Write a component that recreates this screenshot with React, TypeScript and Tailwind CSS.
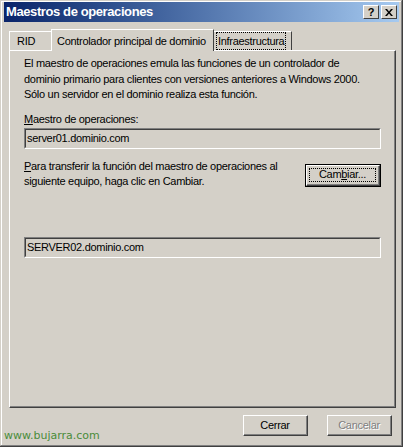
import React from "react";

const F = { fontFamily: '"Liberation Sans", Arial, sans-serif' };

function Field({ text }: { text: string }) {
  return (
    <div className="border-t border-l border-t-[#808080] border-l-[#808080] border-b border-r border-b-white border-r-white">
      <div className="border-t border-l border-t-[#404040] border-l-[#404040] border-b border-r border-b-[#d4d0c8] border-r-[#d4d0c8] h-[19px] flex items-center px-[1px] text-[11px] text-black">
        {text}
      </div>
    </div>
  );
}

function Btn({ children, disabled, focus, w }: { children: React.ReactNode; disabled?: boolean; focus?: boolean; w: string }) {
  return (
    <div className={`${w} h-[23px] border ${focus ? "border-black" : "border-transparent"}`}>
      <div className="w-full h-full border-t border-l border-t-white border-l-white border-b border-r border-b-[#404040] border-r-[#404040]">
        <div className="w-full h-full border-b border-r border-b-[#808080] border-r-[#808080] flex items-center justify-center p-[2px]">
          <div className={`w-full h-full flex items-center justify-center text-[11px] ${focus ? "outline-1 outline-dotted outline-black -outline-offset-1" : ""} ${disabled ? "text-[#808080] [text-shadow:1px_1px_0_#fff]" : "text-black"}`}>
            {children}
          </div>
        </div>
      </div>
    </div>
  );
}

export default function App() {
  return (
    <div style={F} className="w-[403px] h-[447px] bg-[#d4d0c8] border-r border-b border-r-[#404040] border-b-[#404040] relative overflow-hidden tracking-[-0.3px]">
      <div className="h-full border-t border-l border-t-[#d4d0c8] border-l-[#d4d0c8] border-r border-b border-r-[#808080] border-b-[#808080] flex flex-col">
        <div className="h-full border-t border-l border-t-white border-l-white flex flex-col px-[2px]">
          {/* Title bar */}
          <div className="h-[20px] bg-gradient-to-r from-[#0a246a] to-[#a6caf0] flex items-center justify-between pl-[2px] pr-[2px]">
            <span className="text-white font-bold text-[13px] tracking-[-0.4px]">Maestros de operaciones</span>
            <div className="flex gap-[2px] tracking-normal">
              {["?", "x"].map((c) => (
                <div key={c} className="w-[16px] h-[14px] bg-[#d4d0c8] border-t border-l border-t-white border-l-white border-b border-r border-b-[#404040] border-r-[#404040] flex items-center justify-center font-bold leading-none text-black">
                  {c === "?" ? <span className="text-[11px]">?</span> : (
                    <svg width="8" height="7" viewBox="0 0 8 7">
                      <path d="M0 0h2l2 2.5L6 0h2L5 3.5 8 7H6L4 4.5 2 7H0l3-3.5z" fill="#000" />
                    </svg>
                  )}
                </div>
              ))}
            </div>
          </div>

          {/* Tabs */}
          <div className="flex items-end pl-[5px] mt-[6px] h-[22px] text-[11px] whitespace-nowrap">
            <div className="h-[19px] w-[43px] border-t border-l border-t-white border-l-white flex items-center pl-[7px] text-black">RID</div>
            <div className="h-[22px] w-[163px] -ml-[1px] border-t border-l border-r border-t-white border-l-white border-r-[#404040] flex items-start pt-[3px] pl-[5px] text-black relative z-10 bg-[#d4d0c8] -mb-[1px]">
              Controlador principal de dominio
            </div>
            <div className="h-[19px] w-[78px] border-t border-r border-t-white border-r-[#404040] flex items-center pl-[3px] text-black">
              <span className="outline-1 outline-dotted outline-black px-[1px]">Infraestructura</span>
            </div>
          </div>

          {/* Panel */}
          <div className="ml-[5px] mr-[3px] h-[358px] border-t border-l border-t-white border-l-white border-r border-b border-r-[#404040] border-b-[#404040]">
            <div className="h-full border-r border-b border-r-[#808080] border-b-[#808080] pl-[14px] pr-[13px] pt-[5px] text-[11px] text-black whitespace-nowrap">
              <p className="leading-[15.5px]">
                El maestro de operaciones emula las funciones de un controlador de<br />
                dominio primario para clientes con versiones anteriores a Windows 2000.<br />
                Sólo un servidor en el dominio realiza esta función.
              </p>
              <p className="mt-[9px] leading-[15px]"><u>M</u>aestro de operaciones:</p>
              <div className="mt-[1px]"><Field text="server01.dominio.com" /></div>
              <div className="mt-[10px] flex justify-between items-start">
                <p className="leading-[15px]"><u>P</u>ara transferir la función del maestro de operaciones al<br />siguiente equipo, haga clic en Cambiar.</p>
                <div className="mt-[5px]"><Btn w="w-[76px]" focus>Cam<u>b</u>iar...</Btn></div>
              </div>
              <div className="mt-[48px]"><Field text="SERVER02.dominio.com" /></div>
            </div>
          </div>

          {/* Bottom buttons */}
          <div className="flex justify-end gap-[17px] mr-[6px] mt-[6px]">
            <Btn w="w-[67px]">Cerrar</Btn>
            <Btn w="w-[67px]" disabled>Cancelar</Btn>
          </div>
          <div className="absolute left-[4px] top-[428px] text-[11px] text-[#4a8c3a] tracking-normal" style={{ fontFamily: '"DejaVu Sans", Verdana, sans-serif' }}>www.bujarra.com</div>
        </div>
      </div>
    </div>
  );
}
